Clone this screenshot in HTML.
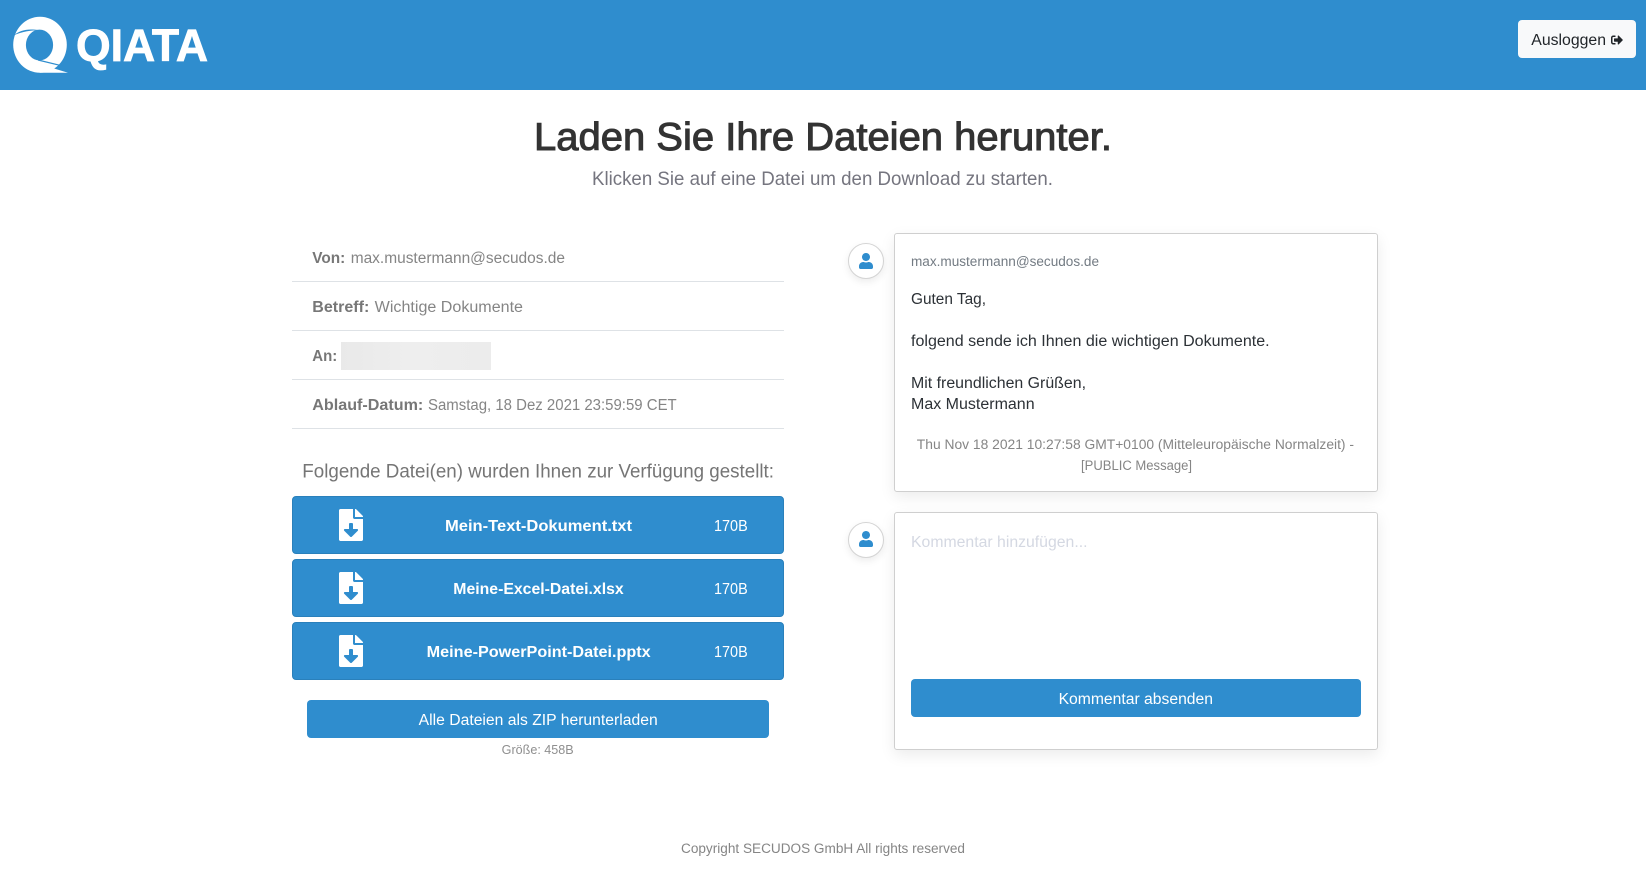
<!DOCTYPE html>
<html lang="de">
<head>
<meta charset="utf-8">
<title>QIATA</title>
<style>
html,body{margin:0;padding:0;background:#fff;width:1646px;height:874px;overflow:hidden}
body{position:relative;font-family:"Liberation Sans",sans-serif}
.abs,.row,.file,.btn,.card,.avatar{position:absolute;box-sizing:border-box}
.header{position:absolute;left:0;top:0;width:1646px;height:90px;background:#2f8dce}
.logout{left:1518px;top:20px;width:118px;height:38px;background:#f8f9fa;border-radius:4px}
.row{left:292px;width:492px;height:1px;background:#dee2e6}
.file{left:292px;width:492px;height:58px;background:#2f8dce;border:1px solid #2a80bb;border-radius:4px}
.btn{background:#2f8dce;border-radius:4px}
.card{left:894px;width:484px;background:#fff;border:1px solid #cfcfcf;border-radius:3px;box-shadow:0 5px 15px rgba(0,0,0,.08)}
.avatar{left:848px;width:36px;height:36px;border:1px solid #d4d4d4;border-radius:50%;background:#fff;box-shadow:0 3px 8px rgba(0,0,0,.08)}
.blur{left:341px;top:342px;width:150px;height:28px;background:linear-gradient(90deg,#e9e9e9,#eeeeee 45%,#ececec)}
svg.overlay{position:absolute;left:0;top:0}
svg.icon{position:absolute}
text{font-family:"Liberation Sans",sans-serif}
</style>
</head>
<body>
<div class="header"></div>

<svg class="icon" style="left:0;top:0" width="80" height="90" viewBox="0 0 80 90">
  <ellipse cx="40" cy="44.8" rx="26.8" ry="28" fill="#fff"/>
  <path d="M26 66 L46 66 L68 72.8 L40 72.8 Z" fill="#fff"/>
  <ellipse cx="39.5" cy="45" rx="13.6" ry="15.4" fill="#2f8dce"/>
  <path d="M13.5 35.5 C20 30 28 28.3 39 30.2 C31 30.2 22 31.5 13.5 35.5 Z" fill="#2f8dce"/>
  <path d="M38 60 L64 66.3" stroke="#2f8dce" stroke-width="1.2" fill="none"/>
</svg>

<div class="abs logout"></div>

<div class="row" style="top:281px"></div>
<div class="row" style="top:330px"></div>
<div class="row" style="top:379px"></div>
<div class="row" style="top:428px"></div>
<div class="abs blur"></div>

<div class="file" style="top:496px"></div>
<div class="file" style="top:559px"></div>
<div class="file" style="top:622px"></div>

<svg class="icon" style="left:338.5px;top:509px" width="24" height="32" viewBox="0 0 384 512"><path fill="#fff" d="M224 136V0H24C10.7 0 0 10.7 0 24v464c0 13.3 10.7 24 24 24h336c13.3 0 24-10.7 24-24V160H248c-13.2 0-24-10.8-24-24zm76.45 211.36l-96.42 95.7c-6.65 6.61-17.39 6.61-24.04 0l-96.42-95.7C73.42 337.29 80.54 320 94.82 320H160v-80c0-8.84 7.16-16 16-16h32c8.84 0 16 7.16 16 16v80h65.18c14.28 0 21.4 17.29 11.27 27.36zM377 105L279.1 7c-4.5-4.5-10.6-7-17-7H256v128h128v-6.1c0-6.3-2.5-12.4-7-16.9z"/></svg>
<svg class="icon" style="left:338.5px;top:572px" width="24" height="32" viewBox="0 0 384 512"><path fill="#fff" d="M224 136V0H24C10.7 0 0 10.7 0 24v464c0 13.3 10.7 24 24 24h336c13.3 0 24-10.7 24-24V160H248c-13.2 0-24-10.8-24-24zm76.45 211.36l-96.42 95.7c-6.65 6.61-17.39 6.61-24.04 0l-96.42-95.7C73.42 337.29 80.54 320 94.82 320H160v-80c0-8.84 7.16-16 16-16h32c8.84 0 16 7.16 16 16v80h65.18c14.28 0 21.4 17.29 11.27 27.36zM377 105L279.1 7c-4.5-4.5-10.6-7-17-7H256v128h128v-6.1c0-6.3-2.5-12.4-7-16.9z"/></svg>
<svg class="icon" style="left:338.5px;top:635px" width="24" height="32" viewBox="0 0 384 512"><path fill="#fff" d="M224 136V0H24C10.7 0 0 10.7 0 24v464c0 13.3 10.7 24 24 24h336c13.3 0 24-10.7 24-24V160H248c-13.2 0-24-10.8-24-24zm76.45 211.36l-96.42 95.7c-6.65 6.61-17.39 6.61-24.04 0l-96.42-95.7C73.42 337.29 80.54 320 94.82 320H160v-80c0-8.84 7.16-16 16-16h32c8.84 0 16 7.16 16 16v80h65.18c14.28 0 21.4 17.29 11.27 27.36zM377 105L279.1 7c-4.5-4.5-10.6-7-17-7H256v128h128v-6.1c0-6.3-2.5-12.4-7-16.9z"/></svg>

<div class="btn" style="left:307px;top:700px;width:462px;height:38px"></div>

<div class="avatar" style="top:243px"></div>
<svg class="icon" style="left:859px;top:252.5px" width="14" height="16" viewBox="0 0 448 512"><path fill="#2f8dce" d="M224 256c70.7 0 128-57.3 128-128S294.7 0 224 0 96 57.3 96 128s57.3 128 128 128zm89.6 32h-16.7c-22.2 10.2-46.9 16-72.9 16s-50.6-5.8-72.9-16h-16.7C60.2 288 0 348.2 0 422.4V464c0 26.5 21.5 48 48 48h352c26.5 0 48-21.5 48-48v-41.6c0-74.2-60.2-134.4-134.4-134.4z"/></svg>
<div class="card" style="top:233px;height:259px"></div>

<div class="avatar" style="top:522px"></div>
<svg class="icon" style="left:859px;top:531px" width="14" height="16" viewBox="0 0 448 512"><path fill="#2f8dce" d="M224 256c70.7 0 128-57.3 128-128S294.7 0 224 0 96 57.3 96 128s57.3 128 128 128zm89.6 32h-16.7c-22.2 10.2-46.9 16-72.9 16s-50.6-5.8-72.9-16h-16.7C60.2 288 0 348.2 0 422.4V464c0 26.5 21.5 48 48 48h352c26.5 0 48-21.5 48-48v-41.6c0-74.2-60.2-134.4-134.4-134.4z"/></svg>
<div class="card" style="top:512px;height:238px"></div>
<div class="btn" style="left:911px;top:679px;width:450px;height:38px"></div>

<svg class="icon" style="left:1611px;top:34px" width="12" height="12" viewBox="0 0 512 512"><path fill="#212529" d="M497 273L329 441c-15 15-41 4.5-41-17v-96H152c-13.3 0-24-10.7-24-24v-96c0-13.3 10.7-24 24-24h136V88c0-21.4 25.9-32 41-17l168 168c9.3 9.4 9.3 24.6 0 34zM192 436v-40c0-6.6-5.4-12-12-12H96c-17.7 0-32-14.3-32-32V160c0-17.7 14.3-32 32-32h84c6.6 0 12-5.4 12-12V76c0-6.6-5.4-12-12-12H96c-53 0-96 43-96 96v192c0 53 43 96 96 96h84c6.6 0 12-5.4 12-12z"/></svg>

<svg class="overlay" width="1646" height="874" viewBox="0 0 1646 874">
  <text x="76" y="60.8" font-size="45" font-weight="700" fill="#fff" stroke="#fff" stroke-width=".8" textLength="132" lengthAdjust="spacingAndGlyphs">QIATA</text>
  <text x="1531.3" y="45" font-size="15.5" fill="#212529" textLength="74.7" lengthAdjust="spacingAndGlyphs">Ausloggen</text>

  <text x="534" y="150" font-size="38.5" fill="#333" stroke="#333" stroke-width="1" textLength="578" lengthAdjust="spacingAndGlyphs">Laden Sie Ihre Dateien herunter.</text>
  <text x="592" y="185" font-size="19.5" fill="#75757f" textLength="461" lengthAdjust="spacingAndGlyphs">Klicken Sie auf eine Datei um den Download zu starten.</text>

  <text x="312.3" y="263" font-size="15.5" font-weight="700" fill="#777" textLength="33" lengthAdjust="spacingAndGlyphs">Von:</text>
  <text x="350.7" y="263" font-size="15.5" fill="#858585" textLength="214.3" lengthAdjust="spacingAndGlyphs">max.mustermann@secudos.de</text>
  <text x="312.3" y="312" font-size="15.5" font-weight="700" fill="#777" textLength="57" lengthAdjust="spacingAndGlyphs">Betreff:</text>
  <text x="374.7" y="312" font-size="15.5" fill="#858585" textLength="148.3" lengthAdjust="spacingAndGlyphs">Wichtige Dokumente</text>
  <text x="312.3" y="361" font-size="15.5" font-weight="700" fill="#777" textLength="25" lengthAdjust="spacingAndGlyphs">An:</text>
  <text x="312.3" y="410" font-size="15.5" font-weight="700" fill="#777" textLength="111" lengthAdjust="spacingAndGlyphs">Ablauf-Datum:</text>
  <text x="428" y="410" font-size="15.5" fill="#858585" textLength="248.7" lengthAdjust="spacingAndGlyphs">Samstag, 18 Dez 2021 23:59:59 CET</text>

  <text x="302.3" y="477.5" font-size="19.5" fill="#757575" textLength="471.7" lengthAdjust="spacingAndGlyphs">Folgende Datei(en) wurden Ihnen zur Verfügung gestellt:</text>

  <text x="445" y="531" font-size="15.5" font-weight="700" fill="#fff" textLength="187" lengthAdjust="spacingAndGlyphs">Mein-Text-Dokument.txt</text>
  <text x="714" y="531" font-size="15.5" fill="#fff" textLength="33.7" lengthAdjust="spacingAndGlyphs">170B</text>
  <text x="453.3" y="594" font-size="15.5" font-weight="700" fill="#fff" textLength="170.4" lengthAdjust="spacingAndGlyphs">Meine-Excel-Datei.xlsx</text>
  <text x="714" y="594" font-size="15.5" fill="#fff" textLength="33.7" lengthAdjust="spacingAndGlyphs">170B</text>
  <text x="426.7" y="657" font-size="15.5" font-weight="700" fill="#fff" textLength="224" lengthAdjust="spacingAndGlyphs">Meine-PowerPoint-Datei.pptx</text>
  <text x="714" y="657" font-size="15.5" fill="#fff" textLength="33.7" lengthAdjust="spacingAndGlyphs">170B</text>

  <text x="418.7" y="725" font-size="15.5" fill="#fff" textLength="239" lengthAdjust="spacingAndGlyphs">Alle Dateien als ZIP herunterladen</text>
  <text x="501.7" y="754" font-size="12.5" fill="#8f8f8f" textLength="72" lengthAdjust="spacingAndGlyphs">Größe: 458B</text>

  <text x="911" y="266" font-size="13.5" fill="#737b83" textLength="188" lengthAdjust="spacingAndGlyphs">max.mustermann@secudos.de</text>
  <text x="911" y="304" font-size="15.5" fill="#2c3136" textLength="75" lengthAdjust="spacingAndGlyphs">Guten Tag,</text>
  <text x="911" y="346" font-size="15.5" fill="#2c3136" textLength="358.6" lengthAdjust="spacingAndGlyphs">folgend sende ich Ihnen die wichtigen Dokumente.</text>
  <text x="911" y="388" font-size="15.5" fill="#2c3136" textLength="175" lengthAdjust="spacingAndGlyphs">Mit freundlichen Grüßen,</text>
  <text x="911" y="409" font-size="15.5" fill="#2c3136" textLength="123.6" lengthAdjust="spacingAndGlyphs">Max Mustermann</text>
  <text x="916.8" y="449" font-size="13.5" fill="#858585" textLength="437.2" lengthAdjust="spacingAndGlyphs">Thu Nov 18 2021 10:27:58 GMT+0100 (Mitteleuropäische Normalzeit) -</text>
  <text x="1081" y="470" font-size="13.5" fill="#858585" textLength="111" lengthAdjust="spacingAndGlyphs">[PUBLIC Message]</text>

  <text x="911" y="547" font-size="15.5" fill="#d4d8e2" textLength="176.5" lengthAdjust="spacingAndGlyphs">Kommentar hinzufügen...</text>
  <text x="1058.6" y="704" font-size="15.5" fill="#fff" textLength="154.4" lengthAdjust="spacingAndGlyphs">Kommentar absenden</text>

  <text x="681" y="853" font-size="13.5" fill="#858585" textLength="284" lengthAdjust="spacingAndGlyphs">Copyright SECUDOS GmbH All rights reserved</text>
</svg>
</body>
</html>
